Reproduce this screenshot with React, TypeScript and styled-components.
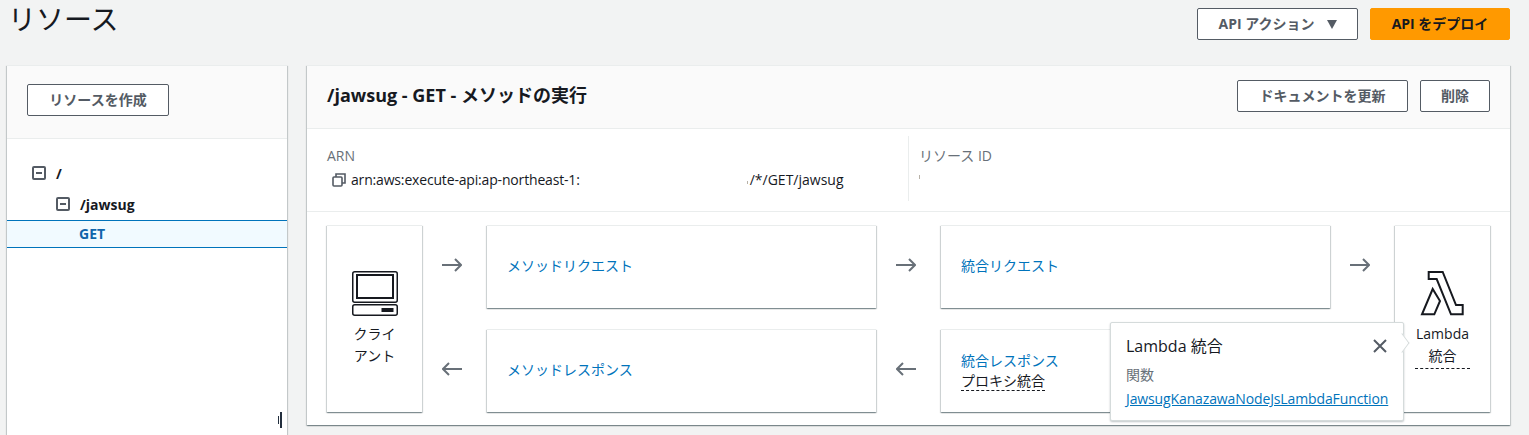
import React from 'react';
import styled, { createGlobalStyle } from 'styled-components';

const GlobalStyle = createGlobalStyle`
  html, body {
    margin: 0;
    padding: 0;
    background: #f2f3f3;
    font-family: "Open Sans", "Noto Sans CJK JP", sans-serif;
    color: #16191f;
    font-size: 14px;
  }
`;

const Page = styled.div`
  width: 1529px;
  height: 435px;
  overflow: hidden;
  box-sizing: border-box;
  padding: 0 19px 0 7px;
`;

const TopBar = styled.div`
  height: 65px;
  display: flex;
  justify-content: space-between;
  align-items: flex-start;
`;

const PageTitle = styled.h1`
  margin: 0 0 0 1px;
  font-size: 28px;
  line-height: 38px;
  font-weight: 400;
`;

const TopActions = styled.div`
  display: flex;
  gap: 12px;
  padding-top: 8px;
`;

const Button = styled.button<{ $width: number; $primary?: boolean }>`
  width: ${p => p.$width}px;
  height: 32px;
  padding: 0 0 2px;
  box-sizing: border-box;
  display: flex;
  align-items: center;
  justify-content: center;
  gap: 12px;
  font-family: inherit;
  font-size: 14px;
  font-weight: 700;
  border-radius: 2px;
  border: 1px solid ${p => (p.$primary ? '#ff9900' : '#545b64')};
  background: ${p => (p.$primary ? '#ff9900' : '#ffffff')};
  color: ${p => (p.$primary ? '#16191f' : '#545b64')};
`;

const Caret = styled.span`
  width: 0;
  height: 0;
  margin-top: 2px;
  border-left: 5.5px solid transparent;
  border-right: 5.5px solid transparent;
  border-top: 9px solid #545b64;
`;

const Columns = styled.div`
  display: flex;
  gap: 20px;
  align-items: flex-start;
`;

const Panel = styled.section`
  background: #ffffff;
  border-top: 1px solid #eaeded;
  box-shadow: 0 1px 1px 0 rgba(0, 28, 36, 0.3), 1px 1px 1px 0 rgba(0, 28, 36, 0.15),
    -1px 1px 1px 0 rgba(0, 28, 36, 0.15);
`;

const SidePanel = styled(Panel)`
  position: relative;
  width: 280px;
  height: 400px;
  flex: none;
`;

const SideHeader = styled.div`
  height: 73px;
  box-sizing: border-box;
  padding: 18px 20px 0;
  background: #fafafa;
  border-bottom: 1px solid #eaeded;
`;

const Tree = styled.div`
  padding-top: 19px;
`;

const TreeRow = styled.div<{ $depth: number }>`
  height: 31px;
  box-sizing: border-box;
  display: flex;
  align-items: center;
  gap: 10px;
  padding: 0 0 1px ${p => 25 + p.$depth * 24}px;
  font-weight: 700;
  font-size: 14px;
  color: #16191f;
`;

const SelectedRow = styled.div`
  height: 28px;
  box-sizing: border-box;
  display: flex;
  align-items: center;
  padding: 0 0 1px 72px;
  font-weight: 700;
  font-size: 14px;
  color: #0f65ab;
  background: #f1faff;
  border-top: 1px solid #0073bb;
  border-bottom: 1px solid #0073bb;
`;

const ResizeHandle = styled.div`
  position: absolute;
  right: 5px;
  bottom: 38px;
  display: flex;
  align-items: center;
  gap: 1px;
`;

const ResizeBar = styled.span<{ $tall?: boolean }>`
  width: ${p => (p.$tall ? 2 : 1)}px;
  height: ${p => (p.$tall ? 16 : 8)}px;
  background: #232f3e;
`;

const MainPanel = styled(Panel)`
  width: 1203px;
  height: 359px;
  flex: none;
  display: flex;
  flex-direction: column;
`;

const MainHeader = styled.div`
  height: 63px;
  box-sizing: border-box;
  display: flex;
  align-items: center;
  justify-content: space-between;
  padding: 0 20px 2px;
  background: #fafafa;
  border-bottom: 1px solid #eaeded;
`;

const MainTitle = styled.h2`
  margin: 0 0 3px;
  font-size: 18px;
  font-weight: 700;
  line-height: 24px;
`;

const HeaderActions = styled.div`
  display: flex;
  gap: 12px;
`;

const Details = styled.div`
  height: 83px;
  box-sizing: border-box;
  display: grid;
  grid-template-columns: 581px 1fr;
  padding: 7px 20px 0;
  border-bottom: 1px solid #eaeded;
`;

const DetailCell = styled.div<{ $divided?: boolean }>`
  height: 65px;
  box-sizing: border-box;
  padding: 10px 0 0 ${p => (p.$divided ? 10 : 0)}px;
  border-left: ${p => (p.$divided ? '1px solid #eaeded' : 'none')};
`;

const DetailLabel = styled.div`
  font-size: 14px;
  line-height: 20px;
  color: #687078;
`;

const DetailValue = styled.div`
  display: flex;
  align-items: center;
  margin-top: 4px;
  padding-left: 5px;
  font-size: 14px;
  line-height: 20px;
  color: #16191f;
`;

const CopyIcon = styled.svg`
  width: 14px;
  height: 14px;
  margin-right: 5px;
  flex: none;
`;

const ArnPrefix = styled.span`
  letter-spacing: -0.17px;
`;

const Redacted = styled.span`
  width: 167px;
  flex: none;
`;

const RedactedTick = styled.span`
  width: 1px;
  height: 3px;
  margin: 5px 2px 0 0;
  flex: none;
  background: #b8b2a8;
`;

const TinyMark = styled.div`
  width: 1px;
  height: 4px;
  margin-top: 9px;
  background: #b8b2a8;
`;

const Diagram = styled.div`
  position: relative;
  flex: 1;
  display: grid;
  grid-template-columns: 95px 65px 389px 65px 389px 65px 95px;
  grid-template-rows: 83px 83px;
  row-gap: 21px;
  padding: 13px 20px 0;
`;

const FlowBox = styled.div`
  background: #ffffff;
  border-top: 1px solid #eaeded;
  box-shadow: 0 1px 1px 0 rgba(0, 28, 36, 0.3), 1px 1px 1px 0 rgba(0, 28, 36, 0.15),
    -1px 1px 1px 0 rgba(0, 28, 36, 0.15);
`;

const EndBox = styled(FlowBox)<{ $col: number }>`
  grid-row: 1 / 3;
  grid-column: ${p => p.$col};
  box-sizing: border-box;
  display: flex;
  flex-direction: column;
  align-items: center;
  padding-top: 45px;
  font-size: 14px;
  line-height: 22px;
  text-align: center;
`;

const EndIcon = styled.svg`
  width: 46px;
  height: 45px;
  margin-bottom: 7px;
  flex: none;
`;

const EndLabel = styled.div<{ $dashed?: boolean }>`
  width: 55px;
  padding-bottom: ${p => (p.$dashed ? 1 : 0)}px;
  border-bottom: ${p => (p.$dashed ? '1px dashed #16191f' : 'none')};
`;

const StepBox = styled(FlowBox)`
  box-sizing: border-box;
  display: flex;
  flex-direction: column;
  justify-content: center;
  padding: 0 20px 2px;
  line-height: 22px;
`;

const StepLink = styled.a`
  color: #0073bb;
  font-size: 14px;
  text-decoration: none;
`;

const DashedText = styled.span`
  align-self: flex-start;
  color: #16191f;
  line-height: 18px;
  border-bottom: 1px dashed #16191f;
`;

const ArrowCell = styled.div`
  display: flex;
  align-items: center;
  justify-content: center;
  padding: 0 6px 4px 0;
`;

const ArrowIcon = styled.svg`
  width: 20px;
  height: 14px;
`;

const Popover = styled.div`
  position: absolute;
  left: 803px;
  top: 110px;
  width: 294px;
  height: 99px;
  box-sizing: border-box;
  padding: 12px 15px;
  background: #ffffff;
  border: 1px solid #d5dbdb;
  border-radius: 2px;
  box-shadow: 0 1px 2px rgba(0, 28, 36, 0.25);
`;

const PopoverPointer = styled.span`
  position: absolute;
  right: -6px;
  top: 13px;
  width: 14px;
  height: 14px;
  box-sizing: border-box;
  background: #ffffff;
  border-top: 1px solid #d5dbdb;
  border-right: 1px solid #d5dbdb;
  transform: scaleX(0.75) rotate(45deg);
`;

const PopoverHead = styled.div`
  display: flex;
  align-items: center;
  justify-content: space-between;
  height: 22px;
  font-size: 16px;
  line-height: 22px;
  color: #16191f;
`;

const CloseIcon = styled.svg`
  width: 16px;
  height: 16px;
`;

const PopoverLabel = styled.div`
  margin-top: 8px;
  font-size: 14px;
  line-height: 20px;
  color: #687078;
`;

const PopoverLink = styled.a`
  display: block;
  margin-top: 4px;
  font-size: 14px;
  line-height: 19px;
  letter-spacing: -0.12px;
  color: #0073bb;
  white-space: nowrap;
  text-decoration: underline;
`;

const ExpandIcon = () => (
  <svg width="14" height="14" viewBox="0 0 14 14" fill="none" stroke="#545b64" strokeWidth="2">
    <rect x="1" y="1" width="12" height="12" rx="1" />
    <path d="M4 7h6" />
  </svg>
);

const ArrowRight = () => (
  <ArrowIcon viewBox="0 0 20 14" fill="none" stroke="#687078" strokeWidth="2">
    <path d="M0 7h19M13 1l6 6-6 6" />
  </ArrowIcon>
);

const ArrowLeft = () => (
  <ArrowIcon viewBox="0 0 20 14" fill="none" stroke="#687078" strokeWidth="2">
    <path d="M20 7H1M7 1L1 7l6 6" />
  </ArrowIcon>
);

export default function App() {
  return (
    <Page>
      <GlobalStyle />
      <TopBar>
        <PageTitle>リソース</PageTitle>
        <TopActions>
          <Button $width={161}>
            API アクション
            <Caret />
          </Button>
          <Button $width={140} $primary>
            API をデプロイ
          </Button>
        </TopActions>
      </TopBar>

      <Columns>
        <SidePanel>
          <SideHeader>
            <Button $width={142}>リソースを作成</Button>
          </SideHeader>
          <Tree>
            <TreeRow $depth={0}>
              <ExpandIcon />/
            </TreeRow>
            <TreeRow $depth={1}>
              <ExpandIcon />/jawsug
            </TreeRow>
            <SelectedRow>GET</SelectedRow>
          </Tree>
          <ResizeHandle>
            <ResizeBar />
            <ResizeBar $tall />
          </ResizeHandle>
        </SidePanel>

        <MainPanel>
          <MainHeader>
            <MainTitle>/jawsug - GET - メソッドの実行</MainTitle>
            <HeaderActions>
              <Button $width={171}>ドキュメントを更新</Button>
              <Button $width={70}>削除</Button>
            </HeaderActions>
          </MainHeader>

          <Details>
            <DetailCell>
              <DetailLabel>ARN</DetailLabel>
              <DetailValue>
                <CopyIcon viewBox="0 0 14 14" fill="none" stroke="#545b64" strokeWidth="1.6">
                  <rect x="1" y="4" width="9" height="9" rx="1" />
                  <path d="M4 4V1h9v9h-3" />
                </CopyIcon>
                <ArnPrefix>arn:aws:execute-api:ap-northeast-1:</ArnPrefix>
                <Redacted />
                <RedactedTick />
                /*/GET/jawsug
              </DetailValue>
            </DetailCell>
            <DetailCell $divided>
              <DetailLabel>リソース ID</DetailLabel>
              <TinyMark />
            </DetailCell>
          </Details>

          <Diagram>
            <EndBox $col={1}>
              <EndIcon viewBox="0 0 46 45" fill="none" stroke="#16191f" strokeWidth="1.5">
                <rect x="0.75" y="0.75" width="44.5" height="30.5" rx="2" />
                <rect x="5" y="4" width="36" height="23" strokeWidth="2" />
                <rect x="0.75" y="33.75" width="44.5" height="10.5" rx="2" />
                <rect x="29.5" y="37" width="12" height="4" fill="#16191f" stroke="none" />
              </EndIcon>
              <EndLabel>クライアント</EndLabel>
            </EndBox>
            <ArrowCell>
              <ArrowRight />
            </ArrowCell>
            <StepBox>
              <StepLink>メソッドリクエスト</StepLink>
            </StepBox>
            <ArrowCell>
              <ArrowRight />
            </ArrowCell>
            <StepBox>
              <StepLink>統合リクエスト</StepLink>
            </StepBox>
            <ArrowCell>
              <ArrowRight />
            </ArrowCell>
            <EndBox $col={7}>
              <EndIcon viewBox="0 0 44 45" fill="none" stroke="#16191f" strokeWidth="2">
                <path d="M7.7 1H21.7L35 34H41.7V43.3H30L15.7 8H7.7Z" />
                <path d="M11.7 18L1 43.3H13.3L19 30Z" />
              </EndIcon>
              <EndLabel $dashed>Lambda 統合</EndLabel>
            </EndBox>
            <ArrowCell>
              <ArrowLeft />
            </ArrowCell>
            <StepBox>
              <StepLink>メソッドレスポンス</StepLink>
            </StepBox>
            <ArrowCell>
              <ArrowLeft />
            </ArrowCell>
            <StepBox>
              <StepLink>統合レスポンス</StepLink>
              <DashedText>プロキシ統合</DashedText>
            </StepBox>

            <Popover>
              <PopoverPointer />
              <PopoverHead>
                Lambda 統合
                <CloseIcon viewBox="0 0 16 16" fill="none" stroke="#545b64" strokeWidth="2">
                  <path d="M2 2l12 12M14 2L2 14" />
                </CloseIcon>
              </PopoverHead>
              <PopoverLabel>関数</PopoverLabel>
              <PopoverLink>JawsugKanazawaNodeJsLambdaFunction</PopoverLink>
            </Popover>
          </Diagram>
        </MainPanel>
      </Columns>
    </Page>
  );
}
